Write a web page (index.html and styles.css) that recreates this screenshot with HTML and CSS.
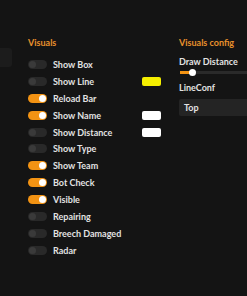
FILE: index.html
```html
<!DOCTYPE html>
<html lang="en">

<head>
    <meta charset="UTF-8">
    <meta name="viewport" content="width=device-width, initial-scale=1.0">
    <title>visuals</title>
    <link rel="stylesheet" href="styles.css">
</head>

<body>
    <div class="page">
        <div class="stub"></div>

        <div class="visuals">
            <div class="title">Visuals</div>
            <div class="row"><span class="toggle"></span><span class="label">Show Box</span></div>
            <div class="row"><span class="toggle"></span><span class="label">Show Line</span><span class="swatch yellow"></span></div>
            <div class="row"><span class="toggle on"></span><span class="label">Reload Bar</span></div>
            <div class="row"><span class="toggle on"></span><span class="label">Show Name</span><span class="swatch"></span></div>
            <div class="row"><span class="toggle"></span><span class="label">Show Distance</span><span class="swatch"></span></div>
            <div class="row"><span class="toggle"></span><span class="label">Show Type</span></div>
            <div class="row"><span class="toggle on"></span><span class="label">Show Team</span></div>
            <div class="row"><span class="toggle on"></span><span class="label">Bot Check</span></div>
            <div class="row"><span class="toggle on"></span><span class="label">Visible</span></div>
            <div class="row"><span class="toggle"></span><span class="label">Repairing</span></div>
            <div class="row"><span class="toggle"></span><span class="label">Breech Damaged</span></div>
            <div class="row"><span class="toggle"></span><span class="label">Radar</span></div>
        </div>

        <div class="config">
            <div class="title">Visuals config</div>
            <div class="field">Draw Distance</div>
            <div class="slider">
                <div class="fill"></div>
                <div class="knob"></div>
            </div>
            <div class="field second">LineConf</div>
            <div class="select">Top</div>
        </div>
    </div>
</body>

</html>
```

FILE: styles.css
```css
html, body {
    margin: 0;
    padding: 0;
    background-color: #141414;
}

body {
    font-family: Lato, "Liberation Sans", sans-serif;
    font-size: 9px;
    font-weight: 700;
    color: #e2e2e2;
    overflow: hidden;
}

.page {
    display: flex;
    width: 247px;
    height: 296px;
    overflow: hidden;
}

.stub {
    flex: none;
    width: 12px;
    height: 19px;
    margin-top: 48px;
    background-color: #1c1c1c;
    border-radius: 0 3px 3px 0;
}

.title {
    color: #e8912c;
    height: 12px;
    line-height: 12px;
    margin-bottom: 7px;
    white-space: nowrap;
}

.visuals {
    flex: none;
    width: 151px;
    margin-left: 16px;
    padding-top: 37px;
}

.row {
    display: flex;
    align-items: center;
    height: 16.9px;
    padding-right: 18px;
}

.label {
    flex: 1;
    white-space: nowrap;
}

.toggle {
    position: relative;
    flex: none;
    width: 19px;
    height: 9px;
    margin-right: 6px;
    border-radius: 5px;
    background-color: #292929;
}

.toggle::after {
    content: "";
    position: absolute;
    top: 1px;
    left: 1px;
    width: 7px;
    height: 7px;
    border-radius: 50%;
    background-color: #3a3a3a;
}

.toggle.on {
    background-color: #f39313;
}

.toggle.on::after {
    left: auto;
    right: 1px;
    background-color: #ffffff;
}

.swatch {
    flex: none;
    width: 19px;
    height: 9px;
    border-radius: 2px;
    background-color: #ffffff;
}

.swatch.yellow {
    background-color: #f5ef00;
}

.config {
    flex: none;
    width: 100px;
    padding-top: 37px;
}

.field {
    height: 12px;
    line-height: 12px;
    white-space: nowrap;
}

.field.second {
    margin-top: 6px;
}

.slider {
    position: relative;
    height: 7px;
    margin-top: 1px;
    margin-left: 1px;
}

.slider::before {
    content: "";
    position: absolute;
    left: 0;
    right: 0;
    top: 2px;
    height: 3px;
    background-color: #2a2a2a;
}

.fill {
    position: absolute;
    left: 0;
    top: 2px;
    width: 11px;
    height: 3px;
    background-color: #f39313;
}

.knob {
    position: absolute;
    left: 9px;
    top: 0;
    width: 7px;
    height: 7px;
    border-radius: 50%;
    background-color: #ffffff;
}

.select {
    height: 17px;
    margin-top: 5px;
    padding-left: 5px;
    line-height: 17px;
    background-color: #242424;
    border-radius: 2px;
}
```
